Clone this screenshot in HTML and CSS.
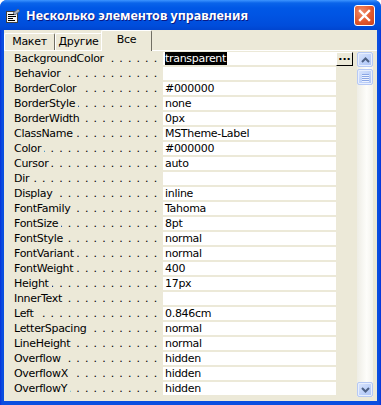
FILE: index.html
```html
<!DOCTYPE html>
<html lang="ru">
<head>
    <meta charset="UTF-8">
    <title>Несколько элементов управления</title>
    <link rel="stylesheet" href="styles.css">
</head>
<body>
    <div class="window">
        <div class="titlebar">
            <svg class="app-icon" width="16" height="16" viewBox="0 0 16 16">
                <rect x="1.5" y="3.5" width="11" height="11" fill="#f4f4f4" stroke="#404040"/>
                <line x1="3" y1="6.5" x2="9" y2="6.5" stroke="#000"/>
                <line x1="3" y1="8.5" x2="11" y2="8.5" stroke="#000"/>
                <line x1="3" y1="10.5" x2="8" y2="10.5" stroke="#000"/>
                <line x1="3" y1="12.5" x2="10" y2="12.5" stroke="#000"/>
                <path d="M8 5 L13 1 L15 3 L10 7 Z" fill="#a8b0bc" stroke="#505868" stroke-width="0.8"/>
            </svg>
            <span class="title">Несколько элементов управления</span>
            <div class="close-btn">
                <svg width="13" height="13" viewBox="0 0 13 13">
                    <path d="M2 2 L11 11 M11 2 L2 11" stroke="#fff" stroke-width="2.4" stroke-linecap="square"/>
                </svg>
            </div>
        </div>
        <div class="client">
            <div class="tabs">
                <div class="tab tab-layout">Макет</div>
                <div class="tab tab-other">Другие</div>
                <div class="tab tab-all active">Все</div>
            </div>
            <div class="panel">
                <div class="props">
                    <div class="row">
                        <div class="name"><span>BackgroundColor</span><span class="leader"></span></div>
                        <div class="value"><span class="selected">transparent</span></div>
                        <div class="builder"><div class="builder-btn">...</div></div>
                    </div>
                    <div class="row"><div class="name"><span>Behavior</span><span class="leader"></span></div><div class="value"></div></div>
                    <div class="row"><div class="name"><span>BorderColor</span><span class="leader"></span></div><div class="value">#000000</div></div>
                    <div class="row"><div class="name"><span>BorderStyle</span><span class="leader"></span></div><div class="value">none</div></div>
                    <div class="row"><div class="name"><span>BorderWidth</span><span class="leader"></span></div><div class="value">0px</div></div>
                    <div class="row"><div class="name"><span>ClassName</span><span class="leader"></span></div><div class="value">MSTheme-Label</div></div>
                    <div class="row"><div class="name"><span>Color</span><span class="leader"></span></div><div class="value">#000000</div></div>
                    <div class="row"><div class="name"><span>Cursor</span><span class="leader"></span></div><div class="value">auto</div></div>
                    <div class="row"><div class="name"><span>Dir</span><span class="leader"></span></div><div class="value"></div></div>
                    <div class="row"><div class="name"><span>Display</span><span class="leader"></span></div><div class="value">inline</div></div>
                    <div class="row"><div class="name"><span>FontFamily</span><span class="leader"></span></div><div class="value">Tahoma</div></div>
                    <div class="row"><div class="name"><span>FontSize</span><span class="leader"></span></div><div class="value">8pt</div></div>
                    <div class="row"><div class="name"><span>FontStyle</span><span class="leader"></span></div><div class="value">normal</div></div>
                    <div class="row"><div class="name"><span>FontVariant</span><span class="leader"></span></div><div class="value">normal</div></div>
                    <div class="row"><div class="name"><span>FontWeight</span><span class="leader"></span></div><div class="value">400</div></div>
                    <div class="row"><div class="name"><span>Height</span><span class="leader"></span></div><div class="value">17px</div></div>
                    <div class="row"><div class="name"><span>InnerText</span><span class="leader"></span></div><div class="value"></div></div>
                    <div class="row"><div class="name"><span>Left</span><span class="leader"></span></div><div class="value">0.846cm</div></div>
                    <div class="row"><div class="name"><span>LetterSpacing</span><span class="leader"></span></div><div class="value">normal</div></div>
                    <div class="row"><div class="name"><span>LineHeight</span><span class="leader"></span></div><div class="value">normal</div></div>
                    <div class="row"><div class="name"><span>Overflow</span><span class="leader"></span></div><div class="value">hidden</div></div>
                    <div class="row"><div class="name"><span>OverflowX</span><span class="leader"></span></div><div class="value">hidden</div></div>
                    <div class="row"><div class="name"><span>OverflowY</span><span class="leader"></span></div><div class="value">hidden</div></div>
                </div>
                <div class="scrollbar">
                    <div class="sb-btn">
                        <svg width="9" height="6" viewBox="0 0 9 6"><path d="M1 5 L4.5 1.5 L8 5" fill="none" stroke="#4d6185" stroke-width="2"/></svg>
                    </div>
                    <div class="sb-thumb">
                        <span></span><span></span><span></span><span></span>
                    </div>
                    <div class="sb-track"></div>
                    <div class="sb-btn">
                        <svg width="9" height="6" viewBox="0 0 9 6"><path d="M1 1 L4.5 4.5 L8 1" fill="none" stroke="#4d6185" stroke-width="2"/></svg>
                    </div>
                </div>
            </div>
        </div>
    </div>
</body>
</html>
```

FILE: styles.css
```css
body {
    margin: 0;
    background-color: white;
    font-family: 'DejaVu Sans', sans-serif;
    font-size: 11px;
    letter-spacing: -0.3px;
    color: black;
}
.window {
    width: 381px;
    height: 405px;
    display: flex;
    flex-direction: column;
    background: linear-gradient(to right, #0831d9, #0a4ee0 2px, #0a4ee0 379px, #0831d9);
    border-radius: 7px 7px 0 0;
    overflow: hidden;
}
.titlebar {
    height: 30px;
    display: flex;
    align-items: center;
    padding: 0 6px 0 5px;
    background: linear-gradient(#3d95ff 0, #0a64ea 3px, #0058e6 8px, #0054e3 50%, #004ddb 85%, #0045d0 100%);
}
.app-icon {
    margin-right: 5px;
    margin-top: 1px;
}
.title {
    flex: 1;
    color: white;
    font-family: 'Noto Sans', sans-serif;
    font-weight: bold;
    font-size: 12.5px;
    letter-spacing: 0;
    text-shadow: 1px 1px #0a1883;
}
.close-btn {
    width: 19px;
    height: 19px;
    border: 1px solid white;
    border-radius: 3px;
    display: flex;
    align-items: center;
    justify-content: center;
    background: radial-gradient(circle at 35% 30%, #f08d6b, #e2582c 55%, #c9401c);
}
.client {
    flex: 1;
    margin: 0 4px 4px 4px;
    background-color: #ece9d8;
    display: flex;
    flex-direction: column;
}
.tabs {
    height: 20px;
    display: flex;
    align-items: flex-end;
    position: relative;
    z-index: 1;
}
.tab {
    height: 16px;
    line-height: 16px;
    text-align: center;
    background-color: #ece9d8;
    border-top: 1px solid white;
    border-left: 1px solid white;
    border-right: 1px solid #716f64;
    border-radius: 2px 2px 0 0;
}
.tab-layout {
    width: 49px;
}
.tab-other {
    width: 45px;
}
.tab-all {
    width: 49px;
}
.tab.active {
    height: 20px;
    line-height: 17px;
    margin-bottom: -1px;
    margin-left: -1px;
}
.panel {
    flex: 1;
    border-top: 1px solid white;
    padding-top: 1px;
    display: flex;
}
.props {
    width: 349px;
}
.row {
    height: 15px;
    display: flex;
}
.name {
    width: 144px;
    height: 13px;
    line-height: 13px;
    padding: 0 5px 0 10px;
    display: flex;
    white-space: nowrap;
}
.leader {
    flex: 1;
    overflow: hidden;
    direction: rtl;
    margin-left: 3px;
    letter-spacing: 0.8px;
}
.leader::before {
    content: ". . . . . . . . . . . . . . . . . . . . . . . . . . . . . . .";
}
.value {
    width: 171px;
    height: 13px;
    line-height: 13px;
    padding-left: 2px;
    background-color: white;
    white-space: nowrap;
}
.selected {
    background-color: black;
    color: white;
    padding-right: 1px;
}
.builder {
    width: 17px;
}
.builder-btn {
    width: 15px;
    height: 12px;
    line-height: 8px;
    text-align: center;
    font-weight: bold;
    letter-spacing: 0;
    border-top: 1px solid white;
    border-left: 1px solid white;
    border-right: 1px solid black;
    border-bottom: 1px solid black;
}
.scrollbar {
    width: 16px;
    height: 345px;
    margin-left: 4px;
    display: flex;
    flex-direction: column;
    background: linear-gradient(to right, #eeede5, #fdfdfa 60%, #f4f3ee);
}
.sb-btn, .sb-thumb {
    height: 13px;
    border: 1px solid #b6c9f5;
    border-radius: 2px;
    background: linear-gradient(to bottom right, #dbe6fd, #bcd0f9 60%, #aec4f6);
    display: flex;
    align-items: center;
    justify-content: center;
    box-shadow: inset 0 0 0 1px #e8effd;
}
.sb-thumb {
    height: 14px;
    margin-top: 2px;
    flex-direction: column;
    gap: 1px;
}
.sb-thumb span {
    width: 7px;
    height: 1px;
    background-color: #8aa6e4;
    box-shadow: 0 1px #eef3fe;
}
.sb-track {
    flex: 1;
}
```
